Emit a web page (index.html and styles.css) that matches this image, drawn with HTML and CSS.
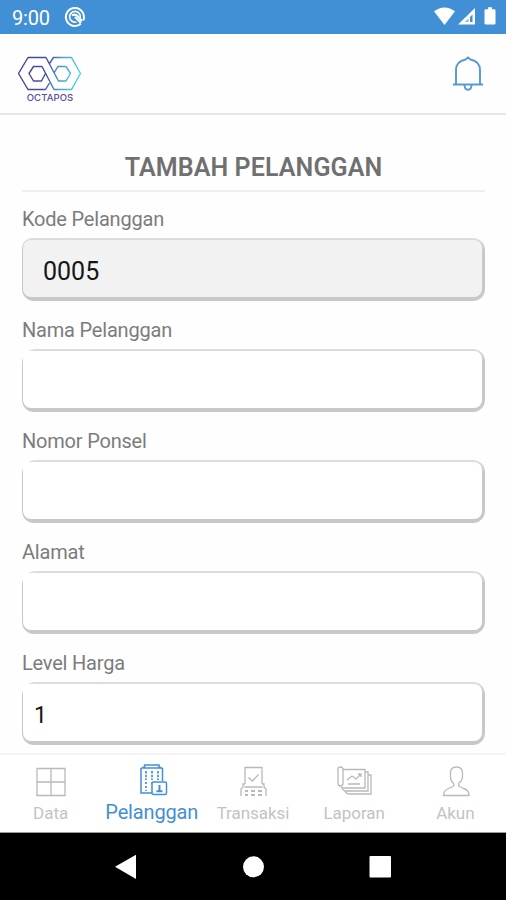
FILE: index.html
```html
<!DOCTYPE html>
<html lang="id">
<head>
<meta charset="utf-8">
<title>Tambah Pelanggan</title>
<link rel="stylesheet" href="styles.css">
</head>
<body>
<div class="screen">
  <div class="status">
    <span class="clock">9:00</span>
    <svg class="dnd" width="22" height="22" viewBox="0 0 22 22" fill="none" stroke="#fff" stroke-width="2"><path d="M16.800 17.800A9 9 0 1 1 19.200 14.500"/><path d="M12.500 16A5.400 5.400 0 1 1 16.300 12" stroke-width="1.600"/><path d="M8 9.500Q11 7.500 13.500 10L18 15M11 11L17 17" stroke-width="2"/></svg>
    <svg class="signals" width="64" height="20" viewBox="0 0 64 20"><path d="M0 4.300Q10.500-3.300 21 4.300L10.500 18z" fill="#fff"/><path d="M41 1v16.500H24z" fill="#fff"/><path d="M38.500 7.500v7.500h-2.500v-5z" fill="#4190d5"/><path d="M34.500 11.200v3.800h-3.800z" fill="#4190d5" opacity=".6"/><path d="M54 .2h4v2h2.200q1.300 0 1.300 1.300v12.700q0 1.300-1.300 1.300h-8.400q-1.300 0-1.300-1.300V3.500q0-1.300 1.300-1.300H54z" fill="#fff"/></svg>
  </div>
  <header class="header">
    <div class="brand">
      <svg width="66" height="36" viewBox="0 0 66 36" fill="none" stroke="url(#g)" stroke-width="1.400" stroke-linejoin="round"><defs><linearGradient id="g" gradientUnits="userSpaceOnUse" x1="0" y1="10" x2="66" y2="18"><stop stop-color="#4b3c8c"/><stop offset=".45" stop-color="#4054a2"/><stop offset=".7" stop-color="#4ba8cd"/><stop offset="1" stop-color="#50d8e8"/></linearGradient></defs><path d="M32.500 7.500L36.500 1.500H54.500L63.500 17.500 54.500 33.500H37L25 10.500H16.500L12 17.500 16.500 25H24.500L28.500 17.500M32.500 27L28.500 33.500H11L1.500 17.500 11 1.500H29L41.500 25H49L53.500 17.500 49 10.500H41L37 17"/></svg>
      <span class="brandname">OCTAPOS</span>
    </div>
    <svg class="bell" width="32" height="36" viewBox="0 0 32 36" fill="none" stroke="#5698d6" stroke-width="1.900"><path d="M1 28.500H31M4 28V14Q4 5.500 13.500 3.500L16 1.500 18.500 3.500Q28 5.500 28 14V28M12.500 29Q12.500 33.700 16 33.700T19.500 29"/></svg>
  </header>
  <main class="content">
    <h1 class="title">TAMBAH PELANGGAN</h1>
    <label class="label">Kode Pelanggan</label>
    <div class="field readonly"><div class="value">0005</div></div>
    <label class="label">Nama Pelanggan</label>
    <div class="field"><div class="value"></div></div>
    <label class="label">Nomor Ponsel</label>
    <div class="field"><div class="value"></div></div>
    <label class="label">Alamat</label>
    <div class="field"><div class="value"></div></div>
    <label class="label">Level Harga</label>
    <div class="field select"><div class="value">1</div></div>
  </main>
  <nav class="tabs">
    <div class="tab"><svg width="36" height="34" viewBox="0 0 36 34"><path d="M4 4.500H32V31.500H4zM18 4.500V31.500M4 18H32"/></svg><span>Data</span></div>
    <div class="tab active"><svg width="36" height="34" viewBox="0 0 36 34"><path d="M18 29H7V4.500L10.500 3V1H25V3L28.500 4.500V17M9 4H27"/><path d="M12 7V16M18 7V16M24 7V16M12 18v2m0 2v2m0 2v1M18 18v2" stroke-dasharray="2.500 1.200" stroke-width="1.700"/><rect x="18" y="18" width="14.500" height="12.500" rx="1.500" fill="#fff"/><path d="M25.500 21v6M22.500 27.200h6" stroke-width="2"/></svg><span>Pelanggan</span></div>
    <div class="tab"><svg width="36" height="34" viewBox="0 0 36 34"><path d="M10 20V3.500H27V20M13.500 13.500L17.500 17 23.500 10.500M10 20H8V23L6 25V32M27 20H29V23L31 25V32M9.500 23H27.500"/><path d="M10 27h3m3 0h4m3 0h4M10 31h3m3 0h4m3 0h4" stroke-width="2.200"/></svg><span>Transaksi</span></div>
    <div class="tab"><svg width="36" height="34" viewBox="0 0 36 34"><path d="M7 6.500V19Q7 22 4.500 22T2 19V5Q2 3 4.500 3T7 6V19M7 5.500H29V24H9Q5 24 3 21M6 24Q7 27 11 27H32V8H29M9 27Q10 30 14 30H35V11H32M11 16L16 12 20 15 25 10M22 10h3v3M12 20H24"/></svg><span>Laporan</span></div>
    <div class="tab"><svg width="36" height="34" viewBox="0 0 36 34"><path d="M6.500 31.500H32Q32 26 26.500 24.500L22.500 22.500Q21 21.500 22 19Q25 17 25.500 13V9Q25.500 3 19.500 3T13.500 9V13.500Q13.500 17 16.500 19.500Q17.500 21.500 16 22.500L11.500 24.500Q6.500 26.500 6.500 31.500z"/></svg><span>Akun</span></div>
  </nav>
  <div class="system">
    <svg width="506" height="66" viewBox="0 0 506 66" fill="#fff"><path d="M115 33.700L136 21.700V46z"/><circle cx="253.500" cy="33.800" r="10.500"/><rect x="369.500" y="23" width="21.500" height="21.500" rx="1"/></svg>
  </div>
</div>
</body>
</html>
```
FILE: styles.css
```css
* { box-sizing: border-box; }
body { margin: 0; font-family: Roboto, sans-serif; background: #fff; }
svg { display: block; flex: none; }
.screen { width: 506px; height: 900px; overflow: hidden; display: flex; flex-direction: column; background: #fefefe; }
.status { height: 34px; flex: none; background: #4190d5; display: flex; align-items: center; padding: 0 8px 0 12px; color: #fff; }
.clock { font-size: 20px; line-height: 34px; padding-top: 2px; width: 52px; letter-spacing: -.2px; }
.signals { margin-left: auto; }
.header { height: 81px; flex: none; border-bottom: 2px solid #e6e6e6; display: flex; align-items: flex-start; justify-content: space-between; padding: 22px 22px 0 17px; }
.brand { display: flex; flex-direction: column; align-items: center; }
.brandname { font-family: Inter, sans-serif; font-size: 9.5px; line-height: 10px; font-weight: 500; letter-spacing: .1px; color: #5a4b9b; margin-top: 1px; transform: scaleY(.95); }
.content { height: 638px; flex: none; padding: 37px 21px 0 22px; }
.title { margin: 0 0 17px; height: 40px; border-bottom: 2px solid #eee; text-align: center; font-size: 25px; line-height: 31px; font-weight: 600; letter-spacing: .1px; color: #707070; }
.label { display: block; height: 20px; line-height: 20px; margin-bottom: 9px; font-size: 20px; letter-spacing: -.2px; color: #7c7c7c; }
.field { height: 63px; margin-bottom: 19px; padding: 2px 3px 4px 1px; border-radius: 14px 12px 12px 12px; background: linear-gradient(#dedede, #c8c8c8 20%); }
.value { height: 57px; padding-left: 20px; border-radius: 3px 8px 8px 8px; background: #fff; font-size: 25px; line-height: 63px; color: #161616; }
.readonly { border-top-left-radius: 10px; }
.readonly .value { background: #f2f2f2; border-radius: 8px; }
.select .value { padding-left: 11px; font-size: 23px; line-height: 64px; }
.tabs { height: 80px; flex: none; border-top: 2px solid #f5f5f5; border-bottom: 1px solid #999; background: #fff; display: grid; grid-template-columns: repeat(5, 1fr); }
.tab { display: flex; flex-direction: column; align-items: center; padding-top: 9px; font-size: 17px; letter-spacing: -.05px; line-height: 24px; color: #c3c3c3; }
.tab span { margin-top: 3px; }
.tab svg { fill: none; stroke: #b9b9b9; stroke-width: 1.3; }
.active { color: #438fd4; font-size: 20px; letter-spacing: -.15px; }
.active span { margin-top: 2px; }
.active svg { stroke: #438fd4; stroke-width: 1.5; }
.system { height: 67px; flex: none; background: #000; }
```
